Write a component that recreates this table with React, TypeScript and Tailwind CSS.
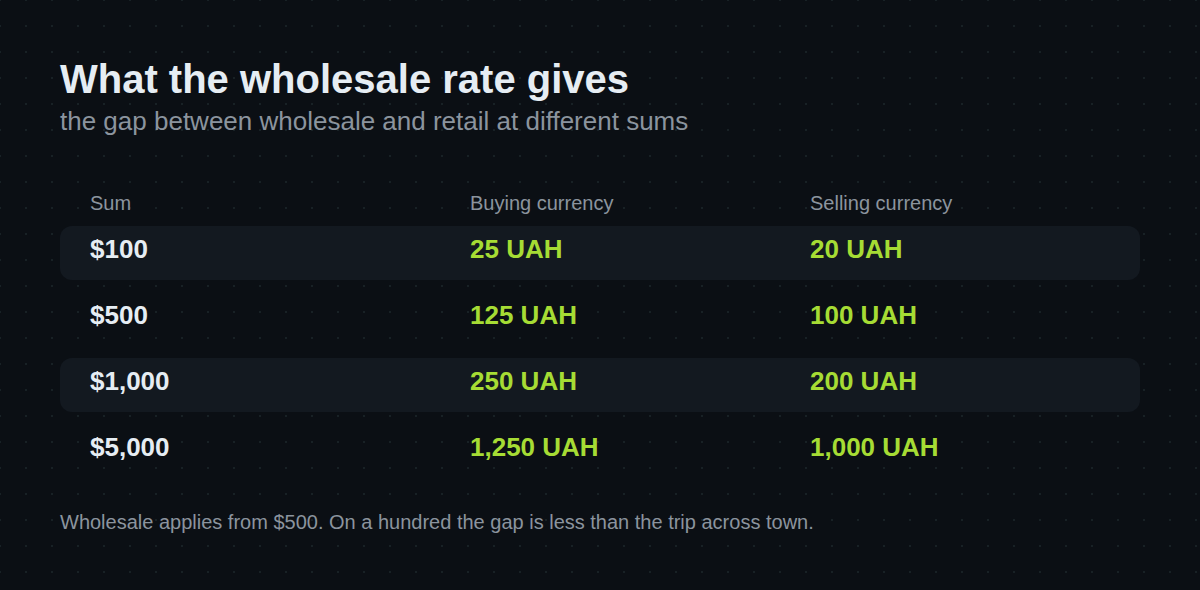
import React from "react";

type Row = {
  sum: string;
  buy: string;
  sell: string;
};

const rows: Row[] = [
  { sum: "$100", buy: "25 UAH", sell: "20 UAH" },
  { sum: "$500", buy: "125 UAH", sell: "100 UAH" },
  { sum: "$1,000", buy: "250 UAH", sell: "200 UAH" },
  { sum: "$5,000", buy: "1,250 UAH", sell: "1,000 UAH" },
];

const App: React.FC = () => {
  return (
    <div
      className="w-[1200px] h-[590px] bg-[#0b0f14] bg-[radial-gradient(circle,#182125_0.8px,transparent_1.2px)] bg-[size:26px_26px] bg-[position:-13px_-13px] px-[60px] pt-[55px] text-[#e6edf3]"
      style={{ fontFamily: '"Liberation Sans", Arial, sans-serif' }}
    >
      <h1 className="text-[40px] font-bold leading-[48px] text-[#e6edf3]">
        What the wholesale rate gives
      </h1>
      <p className="mt-[2px] text-[26px] leading-[32px] text-[#8b949e]">
        the gap between wholesale and retail at different sums
      </p>

      <div className="mt-[54px]">
        <div className="flex px-[30px] text-[20px] leading-[24px] text-[#8b949e]">
          <div className="w-[380px]">Sum</div>
          <div className="w-[340px]">Buying currency</div>
          <div>Selling currency</div>
        </div>
        <div className="mt-[11px] flex flex-col gap-[12px]">
          {rows.map((r, i) => (
            <div
              key={r.sum}
              className={`flex items-center h-[54px] px-[30px] pb-[9px] rounded-[12px] text-[26px] leading-[30px] font-bold ${
                i % 2 === 0 ? "bg-[#131920]" : ""
              }`}
            >
              <div className="w-[380px] text-[#e6edf3]">{r.sum}</div>
              <div className="w-[340px] text-[#a6dc34]">{r.buy}</div>
              <div className="text-[#a6dc34]">{r.sell}</div>
            </div>
          ))}
        </div>
      </div>

      <p className="mt-[32px] text-[20px] leading-[24px] text-[#8b949e]">
        Wholesale applies from $500. On a hundred the gap is less than the trip
        across town.
      </p>
    </div>
  );
};

export default App;
